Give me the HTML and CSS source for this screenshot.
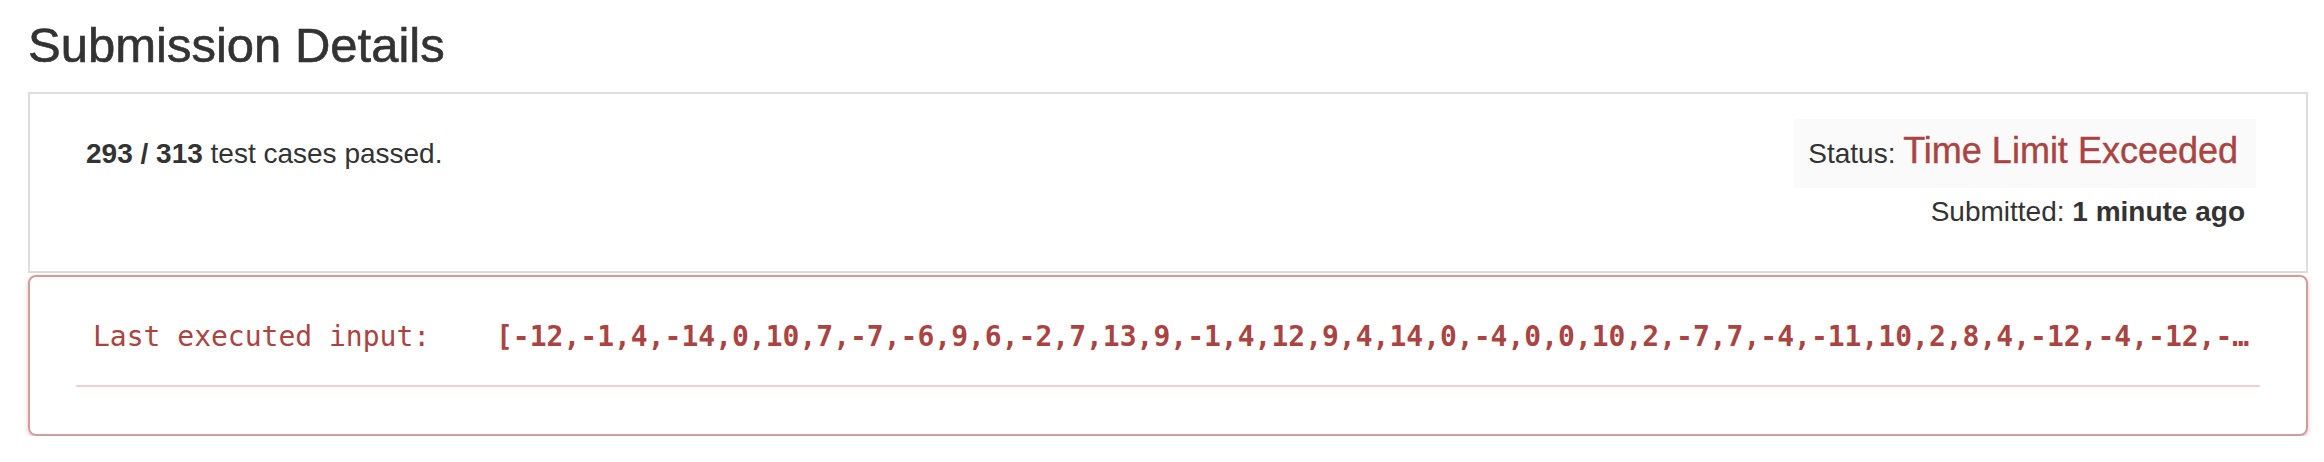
FILE: index.html
```html
<!DOCTYPE html>
<html lang="en">
<head>
<meta charset="utf-8">
<title>Submission Details</title>
<link rel="stylesheet" href="styles.css">
</head>
<body>
<div class="page">
  <h3 class="title">Submission Details</h3>
  <div class="summary">
    <div class="passed"><strong>293 / 313</strong> test cases passed.</div>
    <div class="meta">
      <div class="status">Status: <span class="status-value">Time Limit Exceeded</span></div>
      <div class="submitted">Submitted: <strong>1 minute ago</strong></div>
    </div>
  </div>
  <div class="error-panel">
    <div class="error-row">
      <div class="error-label">Last executed input:</div>
      <div class="error-value">[-12,-1,4,-14,0,10,7,-7,-6,9,6,-2,7,13,9,-1,4,12,9,4,14,0,-4,0,0,10,2,-7,7,-4,-11,10,2,8,4,-12,-4,-12,-5,3,11,-8,6,0,-9,13,-2,5,1,-3,8,7,-10,12,-6,2,0,4,9,-13,5,-1,3,6,-8,10,-14,2,7]</div>
    </div>
    <div class="divider"></div>
  </div>
</div>
</body>
</html>
```

FILE: styles.css
```css
html, body {
  margin: 0;
  padding: 0;
  background: #ffffff;
}

body {
  font-family: "Liberation Sans", Arial, Helvetica, sans-serif;
  color: #333333;
  font-size: 28px;
  line-height: 40px;
}

.page {
  margin-left: 28px;
  width: 2280px;
}

.title {
  margin: 19px 0 19px 0;
  font-size: 49px;
  line-height: 1.1;
  font-weight: 400;
  color: #333333;
  -webkit-text-stroke: 0.6px #333333;
}

.summary {
  box-sizing: border-box;
  border: 2px solid #dddddd;
  padding: 25px 50px 39px 56px;
  display: flex;
  justify-content: space-between;
  align-items: flex-start;
}

.passed {
  margin-top: 15px;
}

.passed strong,
.submitted strong {
  font-weight: 700;
}

.meta {
  display: flex;
  flex-direction: column;
  align-items: flex-end;
}

.status {
  background: #fafafa;
  padding: 12px 18px 14px 14px;
  line-height: 40px;
}

.status-value {
  font-size: 36px;
  color: #a94442;
  -webkit-text-stroke: 0.4px #a94442;
}

.submitted {
  margin-top: 4px;
  margin-right: 11px;
}

.error-panel {
  box-sizing: border-box;
  margin-top: 2px;
  border: 2px solid #d09c9c;
  border-radius: 8px;
  box-shadow: 0 2px 5px rgba(169, 68, 66, 0.3);
  padding: 40px 46px 47px 46px;
}

.error-row {
  display: flex;
  padding: 0 6px 0 17px;
  font-family: "DejaVu Sans Mono", "Liberation Mono", monospace;
  font-size: 28px;
  line-height: 40px;
  color: #a94442;
}

.error-label {
  flex: 0 0 403px;
  white-space: nowrap;
}

.error-value {
  flex: 1 1 auto;
  min-width: 0;
  font-weight: 700;
  white-space: nowrap;
  overflow: hidden;
  text-overflow: ellipsis;
}

.divider {
  margin-top: 28px;
  height: 2px;
  background: #f0d0d0;
}
```
